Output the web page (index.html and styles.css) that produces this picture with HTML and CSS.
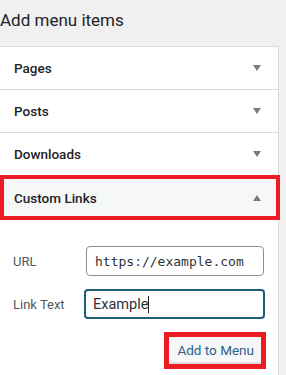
FILE: index.html
```html
<!DOCTYPE html>
<html>
<head>
<meta charset="utf-8">
<link rel="stylesheet" href="styles.css">
</head>
<body>
<h2 class="title">Add menu items</h2>
<div class="panel">
  <div class="row"><span class="row-label">Pages</span><span class="arrow down"></span></div>
  <div class="row"><span class="row-label">Posts</span><span class="arrow down"></span></div>
  <div class="row"><span class="row-label">Downloads</span><span class="arrow down"></span></div>
  <div class="row open highlight"><span class="row-label">Custom Links</span><span class="arrow up"></span></div>
  <div class="body">
    <div class="field">
      <label class="label">URL</label>
      <div class="input url">https://example.com</div>
    </div>
    <div class="field">
      <label class="label">Link Text</label>
      <div class="input focus">Example<span class="caret"></span></div>
    </div>
    <div class="actions">
      <div class="btn-wrap"><button class="btn">Add to Menu</button></div>
    </div>
  </div>
</div>
</body>
</html>
```
FILE: styles.css
```css
html, body {
  margin: 0;
  padding: 0;
  background: #f0f0f1;
  font-family: "Roboto", "Open Sans", sans-serif;
  color: #1d2327;
}
.title {
  margin: 0;
  height: 46px;
  box-sizing: border-box;
  padding-top: 9px;
  font-size: 17px;
  font-weight: 400;
  line-height: 23px;
  color: #1d2327;
}
.panel {
  width: 279px;
  box-sizing: border-box;
  background: #fff;
  border-top: 1px solid #dcdcde;
  border-right: 1px solid #dcdcde;
}
.row {
  height: 43px;
  box-sizing: border-box;
  display: flex;
  align-items: center;
  justify-content: space-between;
  padding: 0 17px 0 14px;
  border-bottom: 1px solid #dcdcde;
  font-size: 13.5px;
  font-weight: 500;
}
.row.open {
  background: #f6f7f7;
}
.highlight {
  position: relative;
  height: 44px;
  border-bottom: none;
}
.highlight::after {
  content: "";
  position: absolute;
  left: 0;
  top: -1px;
  right: -2px;
  bottom: 0;
  border: 4px solid #ed1c24;
}
.arrow {
  width: 0;
  height: 0;
  border-left: 4.5px solid transparent;
  border-right: 4.5px solid transparent;
}
.arrow.down { border-top: 6px solid #787c82; }
.arrow.up { border-bottom: 6px solid #787c82; }
.body {
  padding: 26px 14px 13px 13px;
}
.field {
  display: flex;
  align-items: center;
  justify-content: space-between;
  margin-bottom: 13px;
}
.label {
  font-size: 13px;
  color: #50575e;
}
.input {
  width: 178px;
  height: 30px;
  box-sizing: border-box;
  border: 1px solid #8c8f94;
  border-radius: 4px;
  padding: 0 8px;
  display: flex;
  align-items: center;
  font-size: 14.5px;
  color: #2c3338;
  background: #fff;
}
.input.url {
  font-family: "DejaVu Sans Mono", monospace;
  font-size: 13px;
}
.input.focus {
  width: 181px;
  border: 2px solid #1d5f7a;
  padding: 0 7px;
  margin-right: -1px;
}
.caret {
  display: inline-block;
  width: 1px;
  height: 17px;
  background: #1d2327;
}
.actions {
  display: flex;
  justify-content: flex-end;
  margin-top: 0;
}
.btn-wrap {
  border: 5px solid #ed1c24;
  margin-right: -2px;
}
.btn {
  display: block;
  height: 27px;
  padding: 0 7px 0 8px;
  border: none;
  border-bottom: 2px solid #dcdcde;
  background: #f6f7f7;
  color: #2c5f8a;
  font-family: inherit;
  font-size: 13.5px;
}
```
